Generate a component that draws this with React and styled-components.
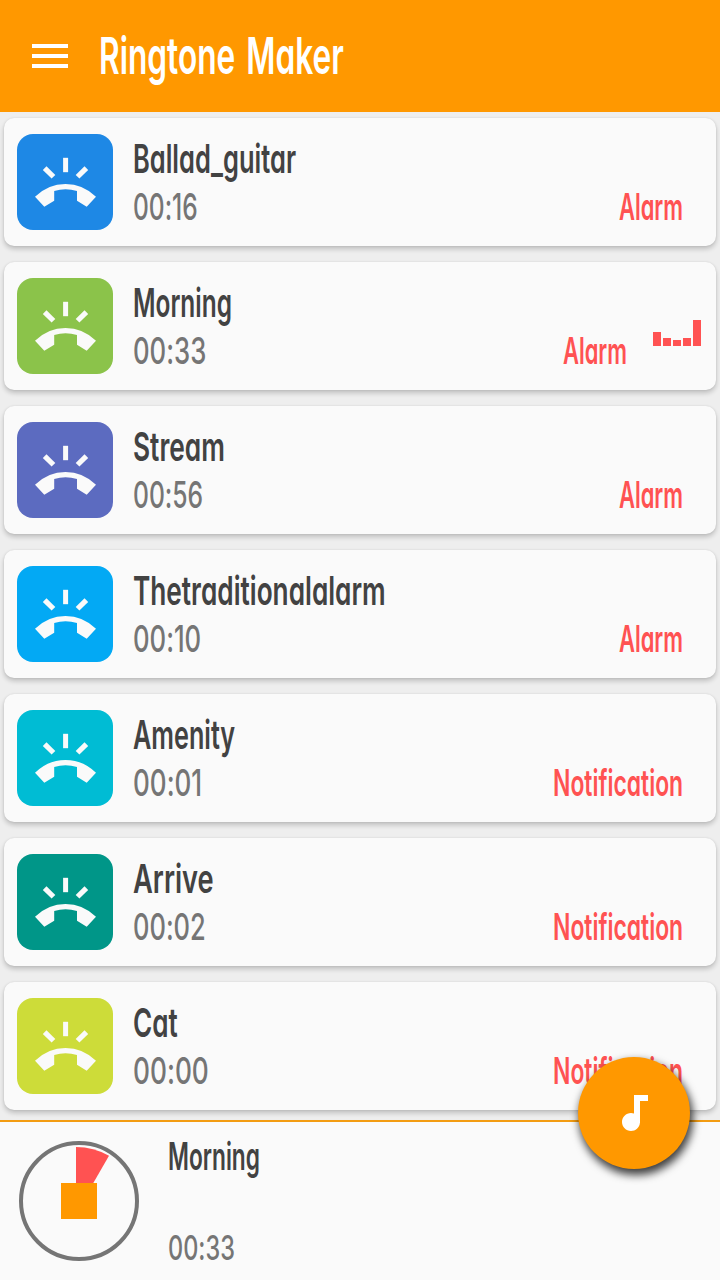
import React, { useLayoutEffect, useRef, useState } from 'react';
import styled, { createGlobalStyle } from 'styled-components';
import { MdAudiotrack } from 'react-icons/md';

const GlobalStyle = createGlobalStyle`
  * {
    box-sizing: border-box;
  }

  body {
    margin: 0;
    background-color: #eeeeee;
    font-family: 'Inter', 'Roboto', sans-serif;
    font-feature-settings: 'cv11' 1, 'calt' 0;
  }
`;

const Screen = styled.div`
  position: relative;
  display: flex;
  flex-direction: column;
  width: 720px;
  height: 1280px;
  overflow: hidden;
  background-color: #eeeeee;
`;

const Header = styled.header`
  display: flex;
  align-items: center;
  flex: none;
  height: 112px;
  padding-left: 32px;
  gap: 31px;
  background-color: #ff9800;
`;

const MenuButton = styled.button`
  display: flex;
  flex-direction: column;
  gap: 6px;
  width: 36px;
  padding: 0;
  border: none;
  background: none;
  cursor: pointer;
`;

const MenuLine = styled.span`
  height: 4px;
  background-color: #fff;
`;

const Title = styled.h1`
  margin: 0;
  color: #fff;
  font-size: 51px;
  font-weight: 600;
  line-height: 108px;
  word-spacing: 5px;
`;

const List = styled.main`
  display: flex;
  flex-direction: column;
  flex: 1;
  min-height: 0;
  gap: 16px;
  padding: 6px 4px 0;
  overflow: hidden;
`;

const Card = styled.article`
  display: flex;
  flex: none;
  height: 128px;
  padding: 16px ${(props) => (props.$playing ? 15 : 33)}px 16px 13px;
  border-radius: 10px;
  background-color: #fafafa;
  box-shadow: 0 3px 5px rgba(0, 0, 0, 0.2), 0 0 2px rgba(0, 0, 0, 0.1);
`;

const Tile = styled.div`
  flex: none;
  width: 96px;
  height: 96px;
  border-radius: 16px;
  background-color: ${(props) => props.$color};
`;

const Info = styled.div`
  flex: 1;
  padding-left: 20px;
`;

const Name = styled.div`
  color: #424242;
  font-size: 40px;
  font-weight: 600;
  line-height: 49px;
`;

const Duration = styled.div`
  color: #757575;
  font-size: 37px;
  font-weight: 500;
  line-height: 48px;
`;

const Kind = styled.div`
  align-self: flex-end;
  color: #ff5252;
  font-size: 37px;
  font-weight: 600;
  line-height: 46px;
`;

const Bars = styled.div`
  display: flex;
  align-items: flex-end;
  align-self: flex-end;
  gap: 2px;
  margin: 0 0 28px 26px;
`;

const Bar = styled.span`
  width: 8px;
  background-color: #ff5252;
`;

const Player = styled.footer`
  display: flex;
  flex: none;
  height: 160px;
  padding: 19px;
  gap: 29px;
  border-top: 2px solid #f39c12;
  background-color: #fafafa;
`;

const PlayerInfo = styled.div`
  display: flex;
  flex-direction: column;
  justify-content: space-between;
  height: 120px;
`;

const PlayerName = styled(Name)`
  font-size: 38px;
  line-height: 31px;
`;

const PlayerTime = styled(Duration)`
  font-size: 34px;
  line-height: 27px;
`;

const Fab = styled.button`
  position: absolute;
  right: 30px;
  bottom: 111px;
  display: flex;
  align-items: center;
  justify-content: center;
  width: 112px;
  height: 112px;
  padding: 0;
  border: none;
  border-radius: 50%;
  background-color: #ff9800;
  color: #fff;
  font-size: 48px;
  box-shadow: 2px 5px 9px 1px rgba(0, 0, 0, 0.75);
  cursor: pointer;
`;

const FitBox = styled.span`
  display: block;
  white-space: nowrap;
`;

const FitInner = styled.span`
  display: inline-block;
  vertical-align: top;
  transform-origin: 0 50%;
`;

// squeezes a text horizontally so that it takes exactly the given width
const Fit = ({ width, children }) => {
  const ref = useRef(null);
  const [scale, setScale] = useState(1);

  useLayoutEffect(() => {
    const measure = () => {
      if (ref.current) setScale(width / ref.current.offsetWidth);
    };
    measure();
    document.fonts.ready.then(measure);
  }, [width, children]);

  return (
    <FitBox style={{ width }}>
      <FitInner ref={ref} style={{ transform: `scaleX(${scale})` }}>{children}</FitInner>
    </FitBox>
  );
};

const RingIcon = () => (
  <svg width="96" height="96" viewBox="0 0 96 96" fill="#fafafa">
    <path d="M46.1 23.8h5V38.2h-5z" />
    <path d="M25.8 35.9l3.7-3.7 8.8 8.7-3.7 3.7z" />
    <path d="M67.5 32.2l3.7 3.7-8.8 8.7-3.7-3.7z" />
    <path d="M18 62.8Q31 50 48.5 50T79 62.8L69.7 72.8 60 66.7V56.9Q48.5 53.4 37.2 56.9V66.7L27.3 72.8z" />
  </svg>
);

const ProgressIcon = () => (
  <svg width="120" height="120" viewBox="0 0 120 120">
    <circle cx="60" cy="60" r="58" fill="none" stroke="#757575" strokeWidth="4" />
    <path d="M57 72V6a66 66 0 0 1 33 8.8z" fill="#ff5252" />
    <path d="M42 42h36v36H42z" fill="#ff9800" />
  </svg>
);

const ringtones = [
  { name: 'Ballad_guitar', nameWidth: 163, time: '00:16', timeWidth: 65, kind: 'Alarm', color: '#1e88e5' },
  { name: 'Morning', nameWidth: 99, time: '00:33', timeWidth: 73, kind: 'Alarm', color: '#8bc34a', playing: true },
  { name: 'Stream', nameWidth: 92, time: '00:56', timeWidth: 70, kind: 'Alarm', color: '#5c6bc0' },
  { name: 'Thetraditionalalarm', nameWidth: 253, time: '00:10', timeWidth: 68, kind: 'Alarm', color: '#03a9f4' },
  { name: 'Amenity', nameWidth: 102, time: '00:01', timeWidth: 69, kind: 'Notification', color: '#00bcd4' },
  { name: 'Arrive', nameWidth: 81, time: '00:02', timeWidth: 73, kind: 'Notification', color: '#009688' },
  { name: 'Cat', nameWidth: 45, time: '00:00', timeWidth: 76, kind: 'Notification', color: '#cddc39' },
];

const kindWidths = { Alarm: 64, Notification: 130 };
const levels = [14, 8, 6, 8, 26];

const Ringtone = ({ item }) => (
  <Card $playing={item.playing}>
    <Tile $color={item.color}>
      <RingIcon />
    </Tile>
    <Info>
      <Name><Fit width={item.nameWidth}>{item.name}</Fit></Name>
      <Duration><Fit width={item.timeWidth}>{item.time}</Fit></Duration>
    </Info>
    <Kind><Fit width={kindWidths[item.kind]}>{item.kind}</Fit></Kind>
    {item.playing && (
      <Bars>
        {levels.map((level, i) => (
          <Bar key={i} style={{ height: level }} />
        ))}
      </Bars>
    )}
  </Card>
);

const App = () => {
  return (
    <Screen>
      <GlobalStyle />
      <Header>
        <MenuButton aria-label="Menu">
          <MenuLine />
          <MenuLine />
          <MenuLine />
        </MenuButton>
        <Title><Fit width={245}>Ringtone Maker</Fit></Title>
      </Header>
      <List>
        {ringtones.map((item) => (
          <Ringtone key={item.name} item={item} />
        ))}
      </List>
      <Player>
        <ProgressIcon />
        <PlayerInfo>
          <PlayerName><Fit width={92}>Morning</Fit></PlayerName>
          <PlayerTime><Fit width={67}>00:33</Fit></PlayerTime>
        </PlayerInfo>
      </Player>
      <Fab aria-label="Add ringtone">
        <MdAudiotrack />
      </Fab>
    </Screen>
  );
};

export default App;
